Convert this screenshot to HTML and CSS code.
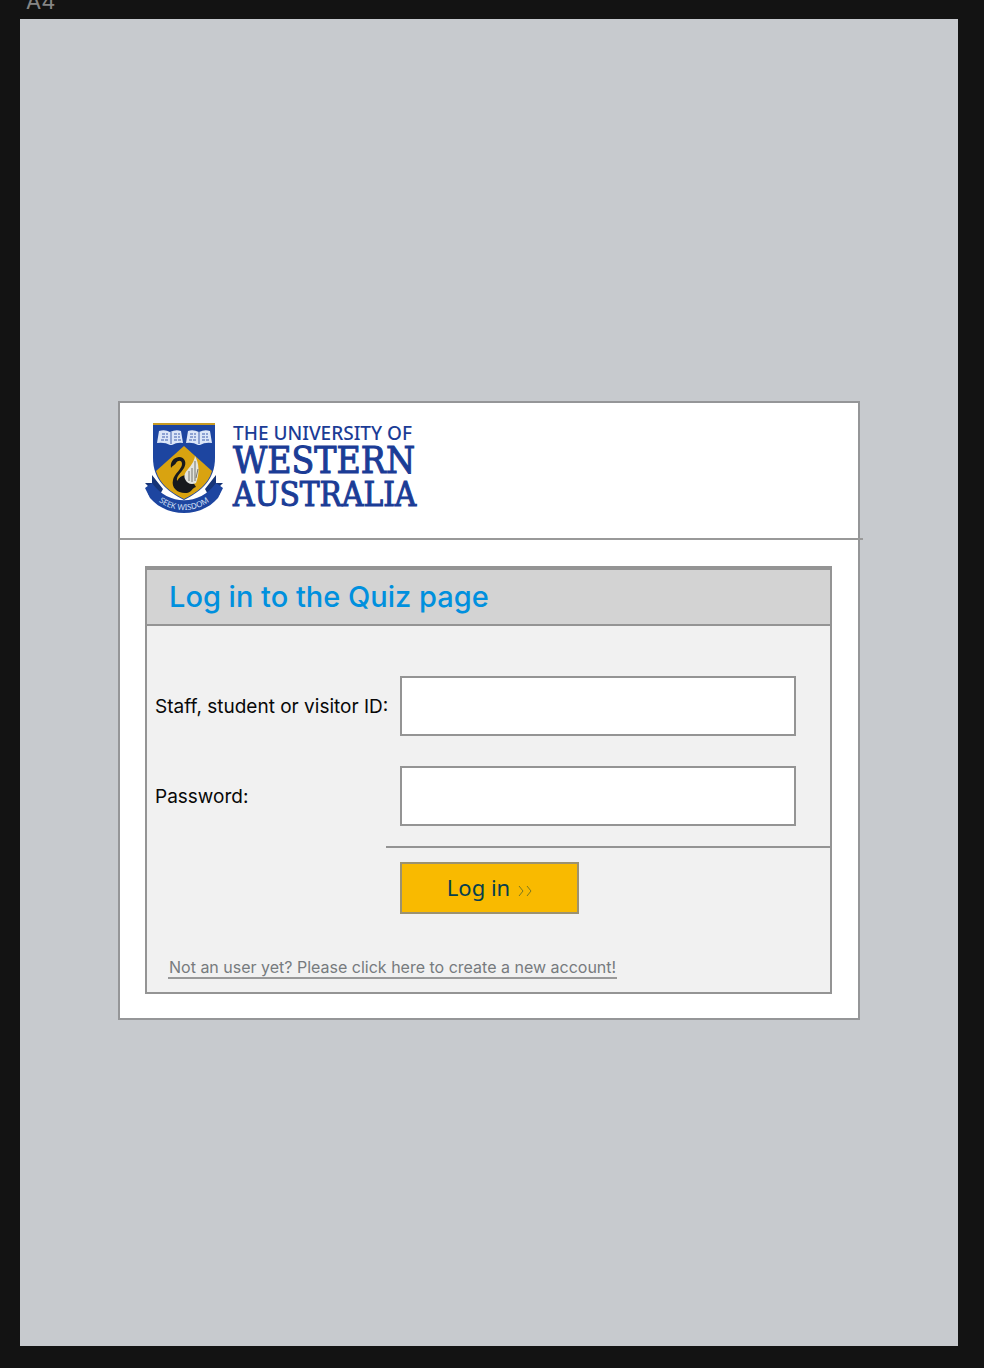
FILE: index.html
```html
<!DOCTYPE html>
<html lang="en">
<head>
<meta charset="utf-8">
<meta name="viewport" content="width=device-width, initial-scale=1">
<title>Log in to the Quiz page</title>
<link rel="stylesheet" href="styles.css">
</head>
<body>
<div class="frame-label">A4</div>
<main class="artboard">
  <section class="card">
    <header class="brand">
      <svg class="crest" width="78" height="91" viewBox="0 0 78 91" aria-hidden="true">
        <path d="M8 1H70V36C70 57 57 69 39 78C21 69 8 57 8 36Z" fill="#1d45a0"/>
        <path d="M8 1H70V3H8Z" fill="#c79a22"/>
        <path d="M39 24L67 49C63 62 53 70 39 77C25 70 15 62 11 49Z" fill="#d9a310"/>
        <g fill="#dce6f8">
          <path d="M14 9Q20 7 25 10Q31 7 36 9L38 21Q32 20 27 23H25Q20 20 12 21Z"/>
          <path d="M43 9Q48 7 54 10Q60 7 65 9L67 21Q60 20 55 23H53Q48 20 41 21Z"/>
        </g>
        <g stroke="#3e5fae" fill="none">
          <path d="M26 10V22M54 10V22"/>
          <path d="M17 12H23M17 15H23M16 18H23M29 12H35M29 15H35M29 18H36M45 12H51M45 15H51M44 18H51M57 12H63M57 15H63M57 18H64" stroke-dasharray="3 1"/>
        </g>
        <path d="M26 46C25 40 28 36 34 35C40 35 42 41 39 46C36 51 31 54 32 59C35 54 39 52 43 54L48 60L51 65C47 66 47 70 42 71C33 72 26 66 28 58C29 52 37 47 37 42C37 38 33 38 31 41C30 43 28 43 26 46Z" fill="#17191d"/>
        <path d="M40 57C37 49 48 46 50 34C54 41 55 51 51 61C47 63 42 62 40 57Z" fill="#e3e4df"/>
        <path d="M50 39L50 59M47 46L47 60M44 49L44 59M53 47L51 56" stroke="#77766e" fill="none"/>
        <path d="M7 53L18 67L12 78L3 72L5 66L0 61H7ZM71 53L60 67L66 78L75 72L73 66L78 61H71Z" fill="#163477"/>
        <path d="M7 61C23 84 55 84 71 61L78 66L73 76C56 96 22 96 5 76L0 66Z" fill="#1d45a0"/>
        <path id="motto" d="M7 73C23 93 55 93 71 73" fill="none"/>
        <text class="motto"><textPath href="#motto" startOffset="50%" text-anchor="middle">SEEK WISDOM</textPath></text>
      </svg>
      <div class="wordmark">
        <span class="wordmark-top">THE UNIVERSITY OF</span>
        <span class="wordmark-mid">WESTERN</span>
        <span class="wordmark-end">AUSTRALIA</span>
      </div>
    </header>
    <form class="panel">
      <h1 class="panel-title">Log in to the Quiz page</h1>
      <div class="fields">
        <label for="user">Staff, student or visitor ID:</label>
        <input id="user" type="text">
        <label for="pass">Password:</label>
        <input id="pass" type="password">
      </div>
      <div class="actions">
        <button class="login" type="button">Log in
          <svg width="14" height="10" viewBox="0 0 14 10" aria-hidden="true"><path d="M1 0L5 5L1 10M9 0L13 5L9 10" fill="none" stroke="#7b7821"/></svg>
        </button>
      </div>
      <a class="signup" href="#">Not an user yet? Please click here to create a new account!</a>
    </form>
  </section>
</main>
</body>
</html>
```
FILE: styles.css
```css
* {
  box-sizing: border-box;
}

body {
  margin: 0;
  min-height: 100vh;
  display: flex;
  flex-direction: column;
  padding: 0 26px 22px 20px;
  background: #131313;
  color: #080808;
  font-family: Inter, "Liberation Sans", sans-serif;
}

.frame-label {
  height: 19px;
  padding-left: 6px;
  display: flex;
  align-items: flex-end;
  overflow: hidden;
  color: #858585;
  font-size: 22px;
  line-height: 36px;
}

.artboard {
  flex: 1;
  padding: 382px 98px 0;
  background: #c7cace;
}

.card {
  border: 2px solid #959698;
  background: #fff;
  padding-bottom: 24px;
}

.brand {
  display: flex;
  align-items: flex-start;
  gap: 10px;
  height: 137px;
  margin: 0 -5px 26px -2px;
  padding: 19px 27px 0;
  border-bottom: 2px solid #999;
}

.crest {
  flex: none;
}

.motto {
  fill: #d5e0f7;
  font: 8px "Noto Sans", sans-serif;
}

.wordmark {
  display: flex;
  flex-direction: column;
  color: #1b3c96;
  white-space: nowrap;
}

.wordmark-top {
  font: 500 19px/22px "Noto Sans", sans-serif;
}

.wordmark-mid,
.wordmark-end {
  font-family: "DejaVu Serif Condensed", "DejaVu Serif", serif;
  line-height: 34px;
  -webkit-text-stroke: 1px #1b3c96;
}

.wordmark-mid {
  font-size: 37px;
}

.wordmark-end {
  font-size: 33px;
}

.panel {
  display: flex;
  flex-direction: column;
  margin: 0 26px 0 25px;
  padding-bottom: 13px;
  border: 2px solid #949494;
  background: #f1f1f1;
}

.panel-title {
  margin: 0;
  padding: 8px 22px;
  border-top: 2px solid #949494;
  border-bottom: 2px solid #949494;
  background: #d3d3d3;
  color: #0090de;
  font-size: 29px;
  font-weight: 500;
  line-height: 38px;
}

.fields {
  display: grid;
  grid-template-columns: 245px 1fr;
  align-items: center;
  row-gap: 30px;
  padding: 50px 34px 20px 8px;
  font-size: 19px;
}

.fields input {
  width: 100%;
  height: 60px;
  padding: 0 12px;
  border: 2px solid #949494;
  border-radius: 0;
  background: #fff;
  font: inherit;
}

.actions {
  margin-left: 239px;
  padding: 14px 14px 0;
  border-top: 2px solid #949494;
}

.login {
  display: flex;
  align-items: center;
  justify-content: center;
  gap: 8px;
  width: 179px;
  height: 52px;
  padding: 0 0 2px;
  border: 2px solid #9c9270;
  background: #f9ba00;
  color: #053f4e;
  font: 22px "Noto Sans", sans-serif;
}

.login svg {
  margin-top: 8px;
}

.signup {
  align-self: flex-start;
  margin: 43px 0 0 21px;
  padding: 0 1px;
  border-bottom: 2px solid #999;
  color: #777b7e;
  font-size: 16px;
  line-height: 20px;
  text-decoration: none;
}
```
